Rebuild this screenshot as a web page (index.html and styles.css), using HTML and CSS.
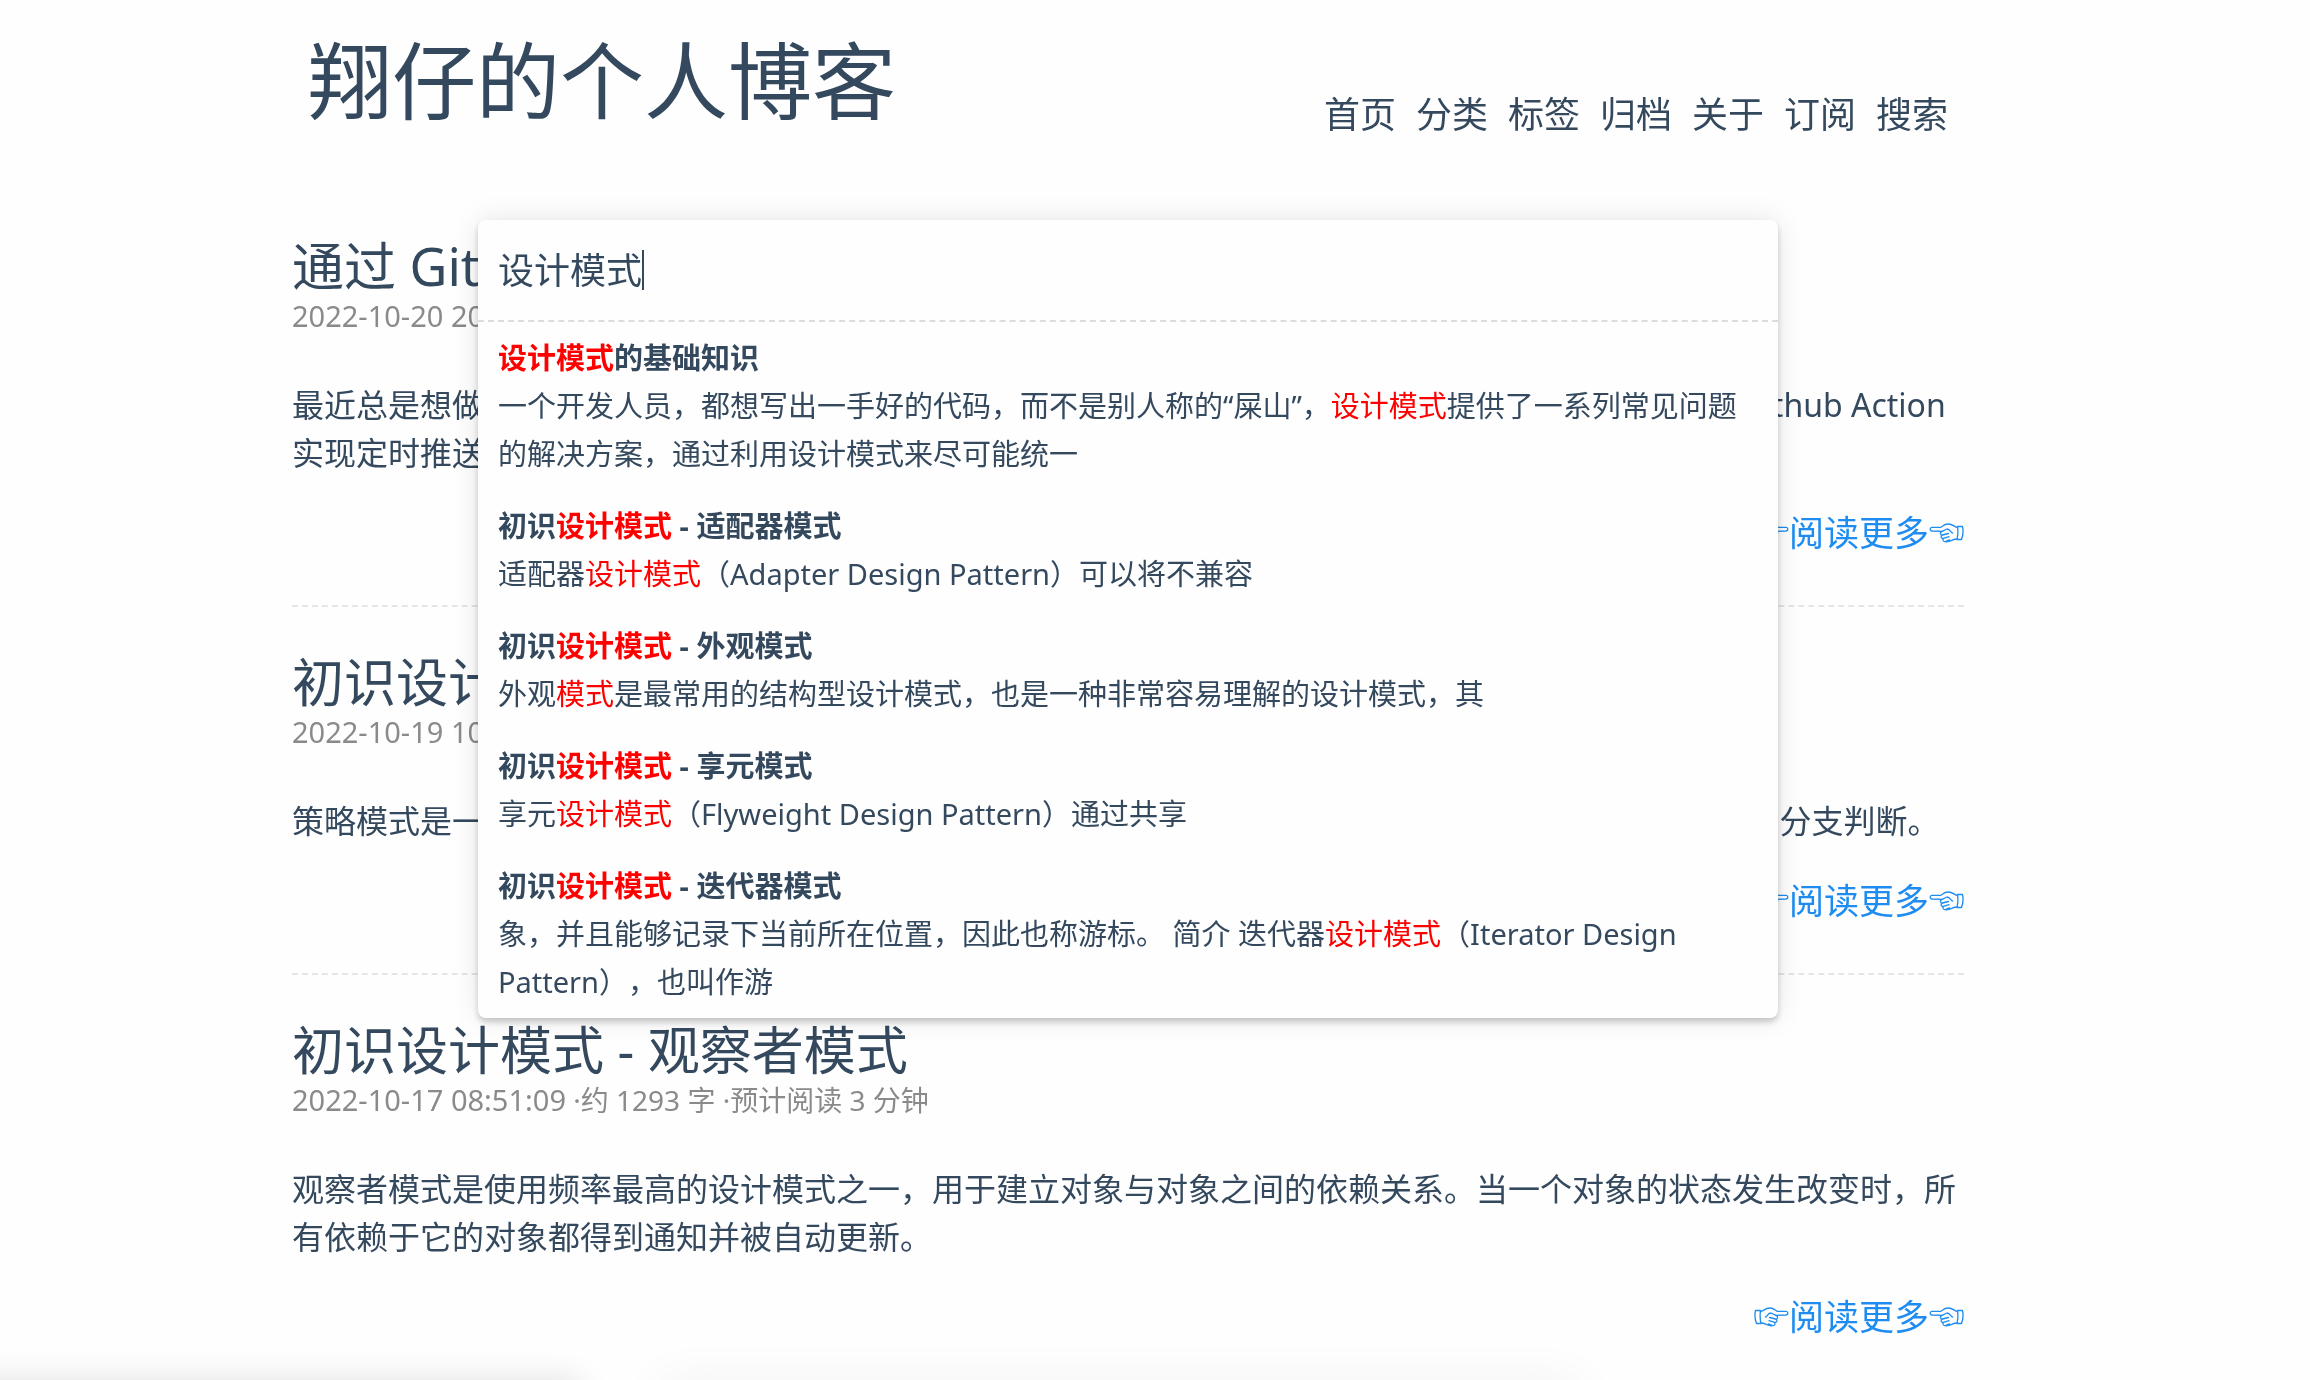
FILE: index.html
```html
<!DOCTYPE html>
<html lang="zh-CN">
<head>
<meta charset="utf-8">
<meta name="viewport" content="width=device-width, initial-scale=1">
<title>翔仔的个人博客</title>
<link rel="stylesheet" href="styles.css">
</head>
<body>
<svg width="0" height="0" class="symbols" aria-hidden="true">
  <symbol id="hand" viewBox="0 0 35 20">
    <path d="M1.5 3.5H6.5Q5.5 10 7 16.500H2.500Q0 10 1.500 3.500Z"/>
    <path d="M6.500 4.500C9.500 4.500 10.500 1 16 1C19.500 1 21 3 23 4.300L32 4.300C34.500 4.500 34.500 7.800 32 8L22 8.300"/>
    <path d="M11.500 10C13.500 9.500 13.500 6.300 17 6L22 8.300C24.500 9.300 23.800 12.300 21.500 12L15.500 10.500"/>
    <path d="M22 12.200C23.800 13.300 22.800 15.800 20.700 15.400L15 13.700M20.500 15.500C21.800 17 20.500 19 18.500 18.500L14.500 16.900M18.500 18.600C14 19.600 11.500 16 7 16"/>
  </symbol>
</svg>
<div class="page">
  <header class="site-header">
    <h1 class="site-title"><a href="#">翔仔的个人博客</a></h1>
    <nav class="site-nav">
      <a href="#">首页</a>
      <a href="#">分类</a>
      <a href="#">标签</a>
      <a href="#">归档</a>
      <a href="#">关于</a>
      <a href="#">订阅</a>
      <a href="#">搜索</a>
    </nav>
  </header>

  <main>
    <article class="post">
      <h2 class="post-title"><a href="#">通过 Github Action 实现定时推送</a></h2>
      <p class="post-meta"><time>2022-10-20 20:30:00</time> ·约 1100 字 ·预计阅读 3 分钟</p>
      <p class="post-excerpt">最近总是想做一些有意思的小工具来提醒自己每天的天气和日程&#xFF0C;刚好看到有人分享了一种做法&#xFF1A;利用 Github Action 实现定时推送消息。</p>
      <p class="post-more"><a href="#"><svg class="hand"><use href="#hand"/></svg>阅读更多<svg class="hand hand-left"><use href="#hand"/></svg></a></p>
    </article>
    <article class="post">
      <h2 class="post-title"><a href="#">初识设计模式 - 策略模式</a></h2>
      <p class="post-meta"><time>2022-10-19 10:20:00</time> ·约 1200 字 ·预计阅读 3 分钟</p>
      <p class="post-excerpt">策略模式是一种行为型设计模式&#xFF0C;将一组算法分别封装起来并使它们可以相互替换&#xFF0C;从而减少大量 if–else 分支判断。</p>
      <p class="post-more"><a href="#"><svg class="hand"><use href="#hand"/></svg>阅读更多<svg class="hand hand-left"><use href="#hand"/></svg></a></p>
    </article>
    <article class="post">
      <h2 class="post-title"><a href="#">初识设计模式 - 观察者模式</a></h2>
      <p class="post-meta"><time>2022-10-17 08:51:09</time> ·约 1293 字 ·预计阅读 3 分钟</p>
      <p class="post-excerpt">观察者模式是使用频率最高的设计模式之一&#xFF0C;用于建立对象与对象之间的依赖关系。当一个对象的状态发生改变时&#xFF0C;所有依赖于它的对象都得到通知并被自动更新。</p>
      <p class="post-more"><a href="#"><svg class="hand"><use href="#hand"/></svg>阅读更多<svg class="hand hand-left"><use href="#hand"/></svg></a></p>
    </article>
  </main>

  <section class="search" role="dialog" aria-label="搜索">
    <div class="search-bar">
      <input class="search-input" type="text" value="设计模式" aria-label="搜索文章">
      <span class="search-caret"></span>
    </div>
    <ul class="search-results">
      <li class="result">
        <a class="result-title" href="#"><em>设计模式</em>的基础知识</a>
        <p class="result-text">一个开发人员&#xFF0C;都想写出一手好的代码&#xFF0C;而不是别人称的“屎山”&#xFF0C;<em>设计模式</em>提供了一系列常见问题的解决方案&#xFF0C;通过利用设计模式来尽可能统一</p>
      </li>
      <li class="result">
        <a class="result-title" href="#">初识<em>设计模式</em> - 适配器模式</a>
        <p class="result-text">适配器<em>设计模式</em>&#xFF08;Adapter Design Pattern&#xFF09;可以将不兼容</p>
      </li>
      <li class="result">
        <a class="result-title" href="#">初识<em>设计模式</em> - 外观模式</a>
        <p class="result-text">外观<em>模式</em>是最常用的结构型设计模式&#xFF0C;也是一种非常容易理解的设计模式&#xFF0C;其</p>
      </li>
      <li class="result">
        <a class="result-title" href="#">初识<em>设计模式</em> - 享元模式</a>
        <p class="result-text">享元<em>设计模式</em>&#xFF08;Flyweight Design Pattern&#xFF09;通过共享</p>
      </li>
      <li class="result">
        <a class="result-title" href="#">初识<em>设计模式</em> - 迭代器模式</a>
        <p class="result-text">象&#xFF0C;并且能够记录下当前所在位置&#xFF0C;因此也称游标。 简介 迭代器<em>设计模式</em>&#xFF08;Iterator Design Pattern&#xFF09;&#xFF0C;也叫作游</p>
      </li>
    </ul>
  </section>
</div>
</body>
</html>
```
FILE: styles.css
```css
* {
  box-sizing: border-box;
}

body {
  margin: 0;
  padding: 0 54px 0 0;
  background: #fefefe;
  color: #34495e;
  font-family: "Noto Sans", "Noto Sans CJK SC", sans-serif;
  font-size: 32px;
  line-height: 48px;
  text-spacing-trim: space-all;
  overflow-x: hidden;
}

/* soft shade along the lower edge of the window */
body::before,
body::after {
  content: "";
  position: fixed;
  top: 100%;
  height: 40px;
}

body::before {
  left: -40px;
  width: 620px;
  box-shadow: 0 0 32px rgba(0, 0, 0, 0.12);
}

body::after {
  left: 660px;
  width: 920px;
  box-shadow: 0 0 48px rgba(0, 0, 0, 0.05);
}

h1, h2, p, ul {
  margin: 0;
  padding: 0;
  font-weight: 400;
}

a {
  color: inherit;
  text-decoration: none;
}

.symbols {
  position: absolute;
}

.page {
  position: relative;
  max-width: 1672px;
  margin: 0 auto;
}

.site-header {
  display: flex;
  justify-content: space-between;
  align-items: flex-end;
  padding: 18px 16px 47px;
}

.site-title {
  font-size: 84px;
  line-height: 126px;
}

.site-nav {
  display: flex;
  gap: 20px;
  font-size: 36px;
  line-height: 58px;
}

.post {
  padding: 43px 0 48px;
  border-bottom: 2px dashed #e6e6e6;
}

.post:last-child {
  padding-bottom: 24px;
  border-bottom: 0;
}

.post-title {
  font-size: 52px;
  line-height: 64px;
}

.post-meta {
  color: #8a8a8a;
  font-size: 28px;
  line-height: 36px;
}

.post-meta time {
  font-size: 29px;
}

.post-excerpt {
  margin-top: 47px;
}

.post-more {
  margin-top: 32px;
  color: #1e8cf0;
  font-size: 35px;
}

.post-more a {
  display: flex;
  justify-content: flex-end;
  align-items: center;
}

.hand {
  width: 35px;
  height: 20px;
  fill: none;
  stroke: currentColor;
  stroke-width: 1.3;
  stroke-linejoin: round;
  stroke-linecap: round;
}

.hand-left {
  transform: scaleX(-1);
}

.search {
  position: absolute;
  top: 220px;
  left: 50%;
  width: 1300px;
  max-width: 100%;
  transform: translateX(-50%);
  border-radius: 8px;
  background: #fefefe;
  box-shadow: 0 4px 6px rgba(0, 0, 0, 0.2), 0 0 28px rgba(0, 0, 0, 0.1);
}

.search-bar {
  position: relative;
  border-bottom: 2px dashed #dcdcdc;
}

.search-input {
  display: block;
  width: 100%;
  height: 100px;
  padding: 0 20px 4px;
  border: 0;
  outline: 0;
  background: transparent;
  color: inherit;
  font: inherit;
  font-size: 36px;
}

.search-caret {
  position: absolute;
  top: 30px;
  left: 164px;
  width: 2px;
  height: 40px;
  background: #34495e;
}

.search-results {
  padding-bottom: 12px;
  list-style: none;
  font-size: 29px;
}

.result {
  padding: 12px 20px;
}

.result:last-child {
  padding-bottom: 0;
}

.result-title {
  display: block;
  font-weight: 700;
}

.result em {
  color: #f00;
  font-style: normal;
}
```
